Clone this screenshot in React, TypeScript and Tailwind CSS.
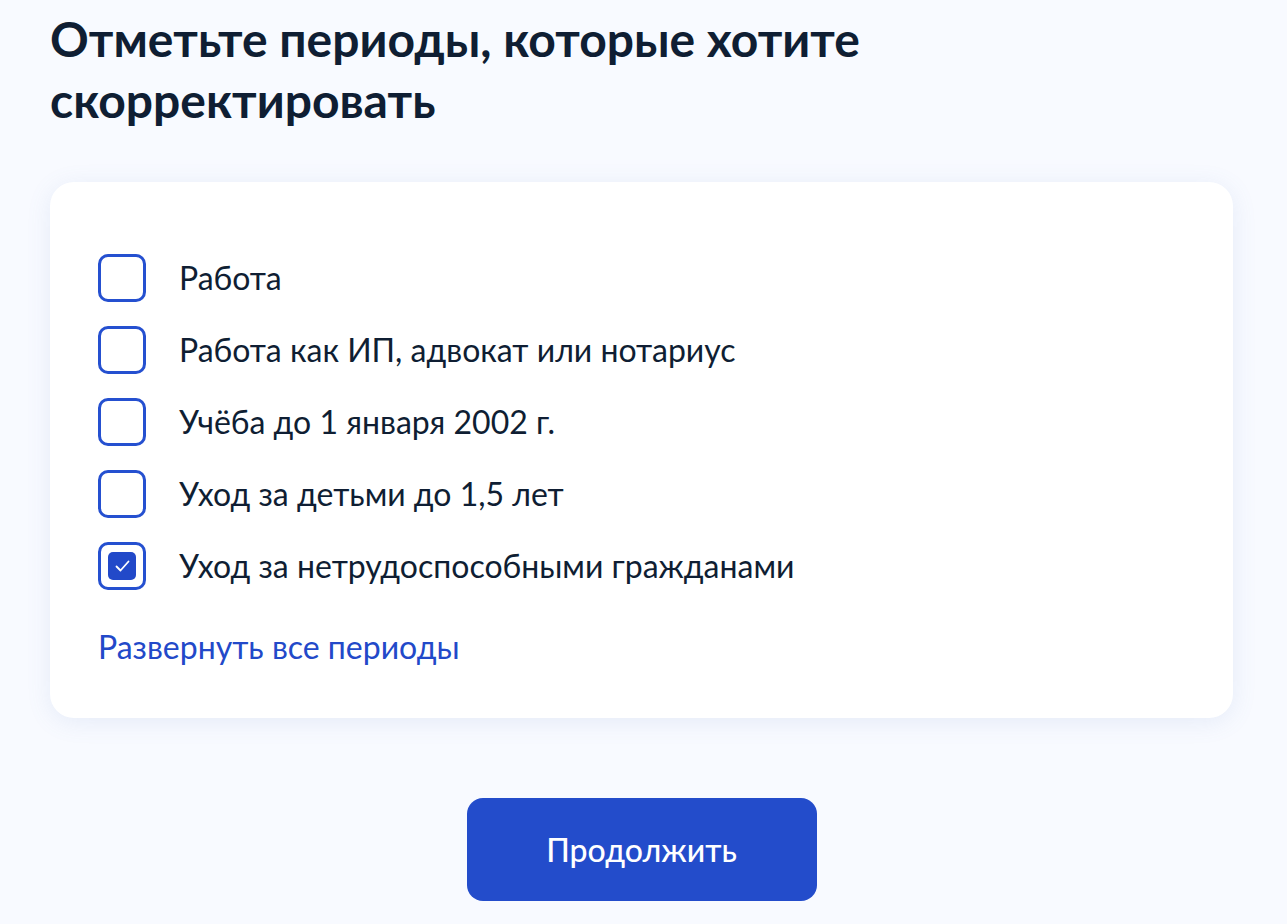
import React, { useState } from "react";

const periods = [
  "Работа",
  "Работа как ИП, адвокат или нотариус",
  "Учёба до 1 января 2002 г.",
  "Уход за детьми до 1,5 лет",
  "Уход за нетрудоспособными гражданами",
];

const Checkbox = ({ checked }: { checked: boolean }) => (
  <span className="flex items-center justify-center w-[48px] h-[48px] shrink-0 rounded-[10px] border-[3px] border-[#2550d0] bg-white">
    {checked && (
      <span className="flex items-center justify-center w-[28px] h-[28px] rounded-[5px] bg-[#2249c9]">
        <svg width="15" height="12" viewBox="0 0 15 12" fill="none">
          <path d="M1.5 6.5l4 4L13.5 1.5" stroke="white" strokeWidth="1.8" strokeLinecap="round" strokeLinejoin="round" />
        </svg>
      </span>
    )}
  </span>
);

export default function App() {
  const [selected, setSelected] = useState<boolean[]>([false, false, false, false, true]);

  const toggle = (i: number) => {
    setSelected((prev) => prev.map((v, j) => (j === i ? !v : v)));
  };

  return (
    <div className="min-h-screen w-full bg-[#f8faff] font-['Lato','Noto_Sans',sans-serif] text-[#0f1e33]">
      <div className="w-[1183px] ml-[50px] pt-[8px] pb-[24px]">
        <h1 className="text-[48px] leading-[61px] font-bold w-[900px]">
          Отметьте периоды, которые хотите скорректировать
        </h1>

        {/* карточка с чекбоксами */}
        <div className="mt-[52px] bg-white rounded-[24px] shadow-[0_4px_24px_rgba(100,130,200,0.12)] px-[48px] pt-[72px] pb-[49px]">
          <div className="flex flex-col gap-[24px]">
            {periods.map((p, i) => (
              <button
                key={p}
                onClick={() => toggle(i)}
                className="flex items-center gap-[33px] text-left"
              >
                <Checkbox checked={selected[i]} />
                <span className="text-[32px] leading-[44px]">{p}</span>
              </button>
            ))}
          </div>
          <a className="block mt-[35px] text-[32px] leading-[44px] text-[#2249c9] cursor-pointer">
            Развернуть все периоды
          </a>
        </div>

        <div className="flex justify-center mt-[80px]">
          <button className="w-[350px] h-[103px] rounded-[16px] bg-[#234ccb] text-white text-[32px] font-medium">
            Продолжить
          </button>
        </div>
      </div>
    </div>
  );
}
